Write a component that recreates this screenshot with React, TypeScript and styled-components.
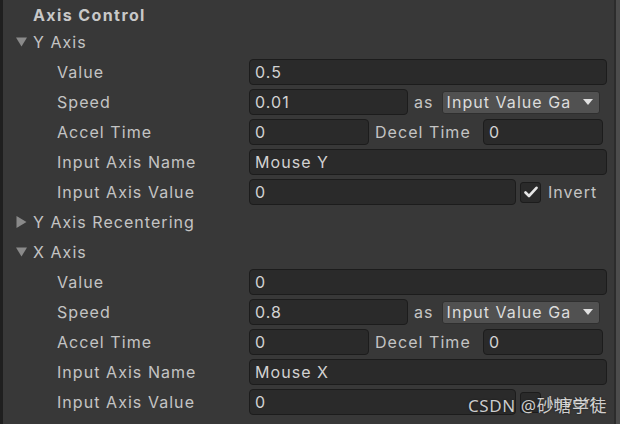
import React from "react";
import styled, { createGlobalStyle } from "styled-components";

const Global = createGlobalStyle`
  html, body { margin: 0; padding: 0; background: #383838; }
  body { font-family: Inter, "Noto Sans", sans-serif; overflow: hidden; }
`;

const Page = styled.div`
  width: 620px;
  height: 424px;
  display: flex;
  position: relative;
  background: #383838;
  overflow: hidden;
`;

const LeftEdge = styled.div`
  width: 3px;
  background: #1f1f1f;
`;

const Panel = styled.div`
  flex: 1;
  display: flex;
  flex-direction: column;
  padding-top: 2px;
  letter-spacing: 1.05px;
`;

const ScrollTrack = styled.div`
  width: 4px;
  border-left: 2px solid #2c2c2c;
  background: #4c4c4c;
`;

const HeaderRow = styled.div`
  height: 25px;
  display: flex;
  align-items: center;
  padding-left: 30px;
  font-size: 16px;
  font-weight: 700;
  letter-spacing: 1.4px;
  color: #c8c8c8;
`;

const Row = styled.div`
  height: 30px;
  display: flex;
  align-items: center;
  color: #c4c4c4;
  font-size: 16px;
`;

const Label = styled.div<{ $indent: number }>`
  width: 246px;
  box-sizing: border-box;
  padding-left: ${(p) => p.$indent}px;
  display: flex;
  align-items: center;
  white-space: nowrap;
`;

const Foldout = styled.span`
  width: 17px;
  display: inline-flex;
  align-items: center;
  margin-left: -17px;
`;

const Field = styled.div<{ $w: number }>`
  width: ${(p) => p.$w}px;
  height: 26px;
  box-sizing: border-box;
  background: #2a2a2a;
  border: 1px solid #1c1c1c;
  border-radius: 4px;
  color: #d2d2d2;
  font-size: 16px;
  padding-left: 5px;
  display: flex;
  align-items: center;
  flex-shrink: 0;
`;

const InlineText = styled.span<{ $ml: number; $w?: number }>`
  margin-left: ${(p) => p.$ml}px;
  ${(p) => (p.$w ? `width: ${p.$w}px;` : "")}
  white-space: nowrap;
  color: #c4c4c4;
  flex-shrink: 0;
`;

const Dropdown = styled.div`
  width: 158px;
  height: 23px;
  box-sizing: border-box;
  background: #515151;
  border: 1px solid #2f2f2f;
  border-radius: 3px;
  color: #dcdcdc;
  padding: 0 6px 0 4px;
  display: flex;
  align-items: center;
  justify-content: space-between;
  margin-left: 8px;
  overflow: hidden;
  white-space: nowrap;
`;

const DropText = styled.span`
  overflow: hidden;
  flex: 1;
`;

const Check = styled.div`
  width: 21px;
  height: 21px;
  box-sizing: border-box;
  margin-left: 4px;
  background: #2a2a2a;
  border: 1px solid #1c1c1c;
  border-radius: 3px;
  display: flex;
  align-items: center;
  justify-content: center;
  flex-shrink: 0;
`;

const Watermark = styled.div`
  position: absolute;
  left: 468px;
  top: 392px;
  font-family: "Noto Sans", "Noto Sans CJK SC", sans-serif;
  font-size: 17px;
  color: rgba(255, 255, 255, 0.78);
  text-shadow: 0 0 2px rgba(0, 0, 0, 0.6);
  white-space: nowrap;
  letter-spacing: 0.6px;
`;

const DownTri = () => (
  <svg width="11" height="10" viewBox="0 0 11 10">
    <path d="M0 0.5 H11 L5.5 9.5 Z" fill="#8a8a8a" />
  </svg>
);
const RightTri = () => (
  <svg width="11" height="12" viewBox="0 0 11 12">
    <path d="M0.5 0 V12 L10.5 6 Z" fill="#8a8a8a" />
  </svg>
);

const Arrow = () => (
  <svg width="10" height="6" viewBox="0 0 10 6">
    <path d="M0 0 H10 L5 6 Z" fill="#e0e0e0" />
  </svg>
);

const Tick = () => (
  <svg width="14" height="12" viewBox="0 0 14 12">
    <path d="M1.5 6.5 L5 10 L12.5 1.8" stroke="#e6e6e6" strokeWidth="2.6" fill="none" strokeLinecap="round" strokeLinejoin="round" />
  </svg>
);

type AxisProps = {
  name: string;
  value: string;
  speed: string;
  input: string;
  invert: boolean;
};

const AxisSection = ({ name, value, speed, input, invert }: AxisProps) => (
  <>
    <Row>
      <Label $indent={30}>
        <Foldout>
          <DownTri />
        </Foldout>
        {name}
      </Label>
    </Row>
    <Row>
      <Label $indent={54}>Value</Label>
      <Field $w={358}>{value}</Field>
    </Row>
    <Row>
      <Label $indent={54}>Speed</Label>
      <Field $w={159}>{speed}</Field>
      <InlineText $ml={6}>as</InlineText>
      <Dropdown>
        <DropText>Input Value Ga</DropText>
        <Arrow />
      </Dropdown>
    </Row>
    <Row>
      <Label $indent={54}>Accel Time</Label>
      <Field $w={120}>0</Field>
      <InlineText $ml={6} $w={108}>
        Decel Time
      </InlineText>
      <Field $w={120}>0</Field>
    </Row>
    <Row>
      <Label $indent={54}>Input Axis Name</Label>
      <Field $w={358}>{input}</Field>
    </Row>
    <Row>
      <Label $indent={54}>Input Axis Value</Label>
      <Field $w={267}>0</Field>
      <Check>{invert ? <Tick /> : null}</Check>
      <InlineText $ml={7}>Invert</InlineText>
    </Row>
  </>
);

export default function App() {
  return (
    <Page>
      <Global />
      <LeftEdge />
      <Panel>
        <HeaderRow>Axis Control</HeaderRow>
        <AxisSection name="Y Axis" value="0.5" speed="0.01" input="Mouse Y" invert />
        <Row>
          <Label $indent={30}>
            <Foldout>
              <RightTri />
            </Foldout>
            Y Axis Recentering
          </Label>
        </Row>
        <AxisSection name="X Axis" value="0" speed="0.8" input="Mouse X" invert={false} />
      </Panel>
      <ScrollTrack />
      <Watermark>CSDN @砂塘学徒</Watermark>
    </Page>
  );
}
